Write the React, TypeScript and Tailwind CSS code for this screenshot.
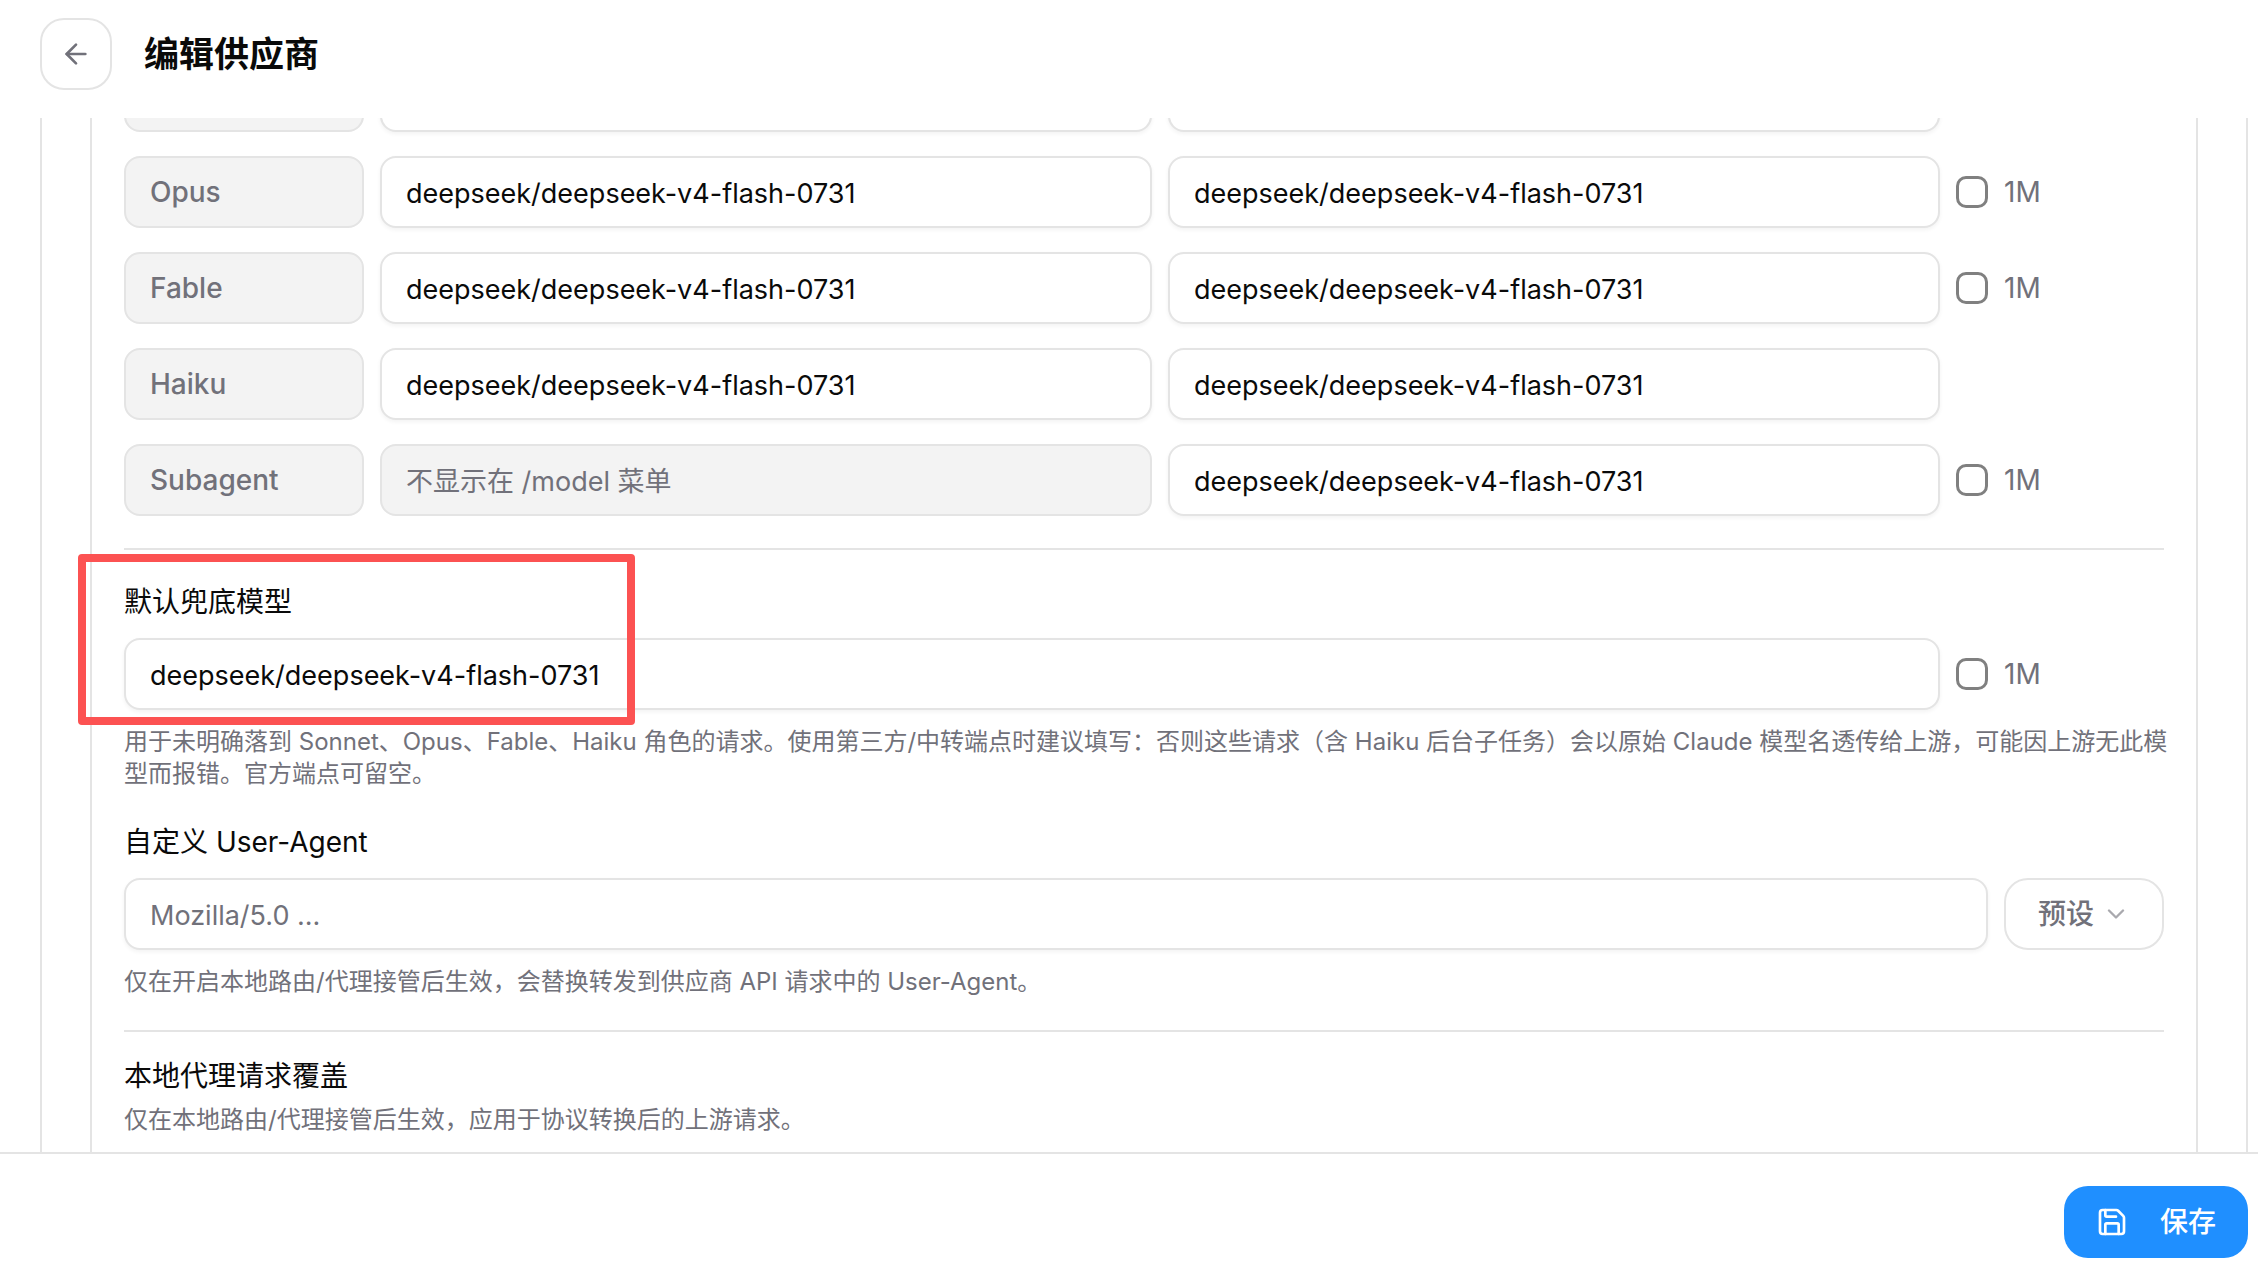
import { useState } from "react";
import { ArrowLeft, ChevronDown, Save } from "lucide-react";

const MODEL = "deepseek/deepseek-v4-flash-0731";

const roles = [
  { name: "Sonnet", display: MODEL, longContext: true },
  { name: "Opus", display: MODEL, longContext: true },
  { name: "Fable", display: MODEL, longContext: true },
  { name: "Haiku", display: MODEL, longContext: false },
  { name: "Subagent", display: null, longContext: true },
];

function TextField({
  label,
  id,
  value = "",
  placeholder,
  disabled = false,
}: {
  label?: string;
  id?: string;
  value?: string;
  placeholder?: string;
  disabled?: boolean;
}) {
  const [text, setText] = useState(value);
  return (
    <input
      type="text"
      id={id}
      aria-label={label}
      value={text}
      placeholder={placeholder}
      disabled={disabled}
      onChange={(e) => setText(e.target.value)}
      className="h-18 w-full min-w-0 rounded-2xl border-2 border-[#e4e4e4] bg-white px-6 pt-0.5 text-[27px] leading-10 text-[#0a0a0a] shadow-[0_2px_4px_rgba(0,0,0,0.05)] outline-none placeholder:text-[#71717a] placeholder:opacity-100 disabled:bg-[#f3f3f3] disabled:shadow-none"
    />
  );
}

function LongContextToggle() {
  return (
    <label className="flex items-center gap-4 text-[28px] leading-10 text-[#71717a]">
      <input
        type="checkbox"
        className="size-8 appearance-none rounded-[10px] border-3 border-[#808080] bg-white checked:bg-[#1f8fff]"
      />
      1M
    </label>
  );
}

function Hint({ children }: { children: string }) {
  return <p className="-mr-2 text-2xl leading-8 text-[#71717a]">{children}</p>;
}

export default function App() {
  return (
    <div
      lang="zh-CN"
      className="flex h-screen flex-col overflow-hidden bg-white font-[Inter,'Noto_Sans_CJK_SC',sans-serif] text-[#0a0a0a]"
    >
      <header className="flex shrink-0 items-center gap-8 px-10 pt-[18px] pb-7">
        <button
          type="button"
          aria-label="返回"
          className="flex size-18 items-center justify-center rounded-3xl border-2 border-[#e4e4e4] text-[#71717a]"
        >
          <ArrowLeft size={32} />
        </button>
        <h1 className="text-[35px] leading-10 font-semibold">编辑供应商</h1>
      </header>

      <main className="min-h-0 flex-1 overflow-hidden pr-2.5 pl-10">
        <div className="border-x-2 border-[#e4e4e4] px-12">
          <div className="border-x-2 border-[#e4e4e4] px-8 pb-8">
            <div className="-mt-[58px] flex flex-col gap-6">
              {roles.map((role) => (
                <div key={role.name} className="grid grid-cols-[240px_1fr_1fr_208px] gap-4">
                  <div className="flex h-18 items-center rounded-2xl border-2 border-[#e4e4e4] bg-[#f3f3f3] px-6 text-[28px] font-medium text-[#71717a]">
                    {role.name}
                  </div>
                  {role.display ? (
                    <TextField label={`${role.name} 显示名称`} value={role.display} />
                  ) : (
                    <TextField label={`${role.name} 显示名称`} placeholder="不显示在 /model 菜单" disabled />
                  )}
                  <TextField label={`${role.name} 请求模型`} value={MODEL} />
                  {role.longContext && <LongContextToggle />}
                </div>
              ))}
            </div>

            <section className="relative mt-8 border-t-2 border-[#e4e4e4] pt-8">
              <div className="pointer-events-none absolute top-1 -left-[46px] h-[171px] w-[557px] rounded-sm border-8 border-[#fc5252]" />
              <label htmlFor="fallback" className="block text-[28px] leading-10">
                默认兜底模型
              </label>
              <div className="mt-4 grid grid-cols-[1fr_208px] gap-4">
                <TextField id="fallback" value={MODEL} />
                <LongContextToggle />
              </div>
              <div className="mt-4">
                <Hint>
                  用于未明确落到 Sonnet、Opus、Fable、Haiku 角色的请求。使用第三方/中转端点时建议填写：否则这些请求（含 Haiku 后台子任务）会以原始 Claude 模型名透传给上游，可能因上游无此模型而报错。官方端点可留空。
                </Hint>
              </div>
            </section>

            <section className="mt-8">
              <label htmlFor="user-agent" className="block text-[28px] leading-10">
                自定义 User-Agent
              </label>
              <div className="mt-4 flex gap-4">
                <TextField id="user-agent" placeholder="Mozilla/5.0 ..." />
                <button
                  type="button"
                  className="flex h-18 shrink-0 items-center gap-2 rounded-3xl border-2 border-[#e4e4e4] px-8 text-[28px] font-medium text-[#71717a]"
                >
                  预设
                  <ChevronDown size={28} className="opacity-60" />
                </button>
              </div>
              <div className="mt-4">
                <Hint>仅在开启本地路由/代理接管后生效，会替换转发到供应商 API 请求中的 User-Agent。</Hint>
              </div>
            </section>

            <section className="mt-8 flex flex-col gap-2 border-t-2 border-[#e4e4e4] pt-6">
              <h2 className="text-[28px] leading-10">本地代理请求覆盖</h2>
              <Hint>仅在本地路由/代理接管后生效，应用于协议转换后的上游请求。</Hint>
            </section>
          </div>
        </div>
      </main>

      <footer className="flex shrink-0 justify-end border-t-2 border-[#e4e4e4] pt-8 pr-2.5 pb-3.5">
        <button
          type="button"
          className="flex h-18 items-center gap-8 rounded-3xl bg-[#1f8fff] px-8 text-[28px] font-medium text-white"
        >
          <Save size={32} />
          保存
        </button>
      </footer>
    </div>
  );
}
